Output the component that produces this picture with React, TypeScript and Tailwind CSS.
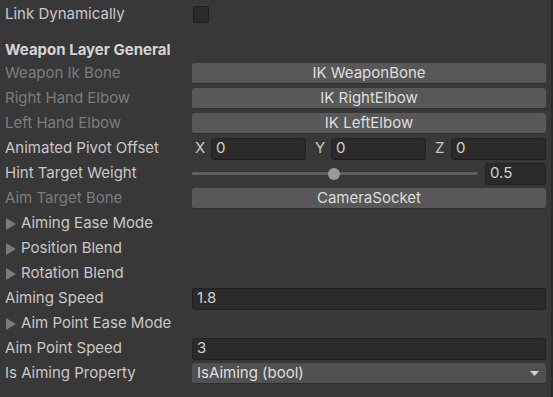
import React from 'react';

const font = "font-['Inter','Noto_Sans',sans-serif]";

const Label: React.FC<{ text: string; dim?: boolean; fold?: boolean }> = ({ text, dim, fold }) => (
  <div className={`w-[187px] shrink-0 flex items-center ${dim ? 'text-[#7d7d7d]' : 'text-[#c8c8c8]'}`}>
    {fold && (
      <svg width="10" height="12" viewBox="0 0 10 12" className="ml-[1px] mr-[5px]">
        <polygon points="0,0 10,6 0,12" fill="#7b7b7b" />
      </svg>
    )}
    <span className="whitespace-nowrap">{text}</span>
  </div>
);

const Row: React.FC<{ children: React.ReactNode }> = ({ children }) => (
  <div className="h-[25px] flex items-center pl-[5px] pr-[7px]">{children}</div>
);

const ObjButton: React.FC<{ text: string }> = ({ text }) => (
  <div className="flex-1 h-[21px] rounded-[3px] bg-[#585858] border-b border-[#303030] flex items-center justify-center text-[#dedede]">
    {text}
  </div>
);

const Field: React.FC<{ value: string; className?: string }> = ({ value, className }) => (
  <div className={`h-[22px] rounded-[3px] bg-[#2a2a2a] border border-[#212121] flex items-center pl-[4px] text-[#d2d2d2] ${className ?? ''}`}>
    {value}
  </div>
);

export default function App() {
  return (
    <div className={`w-[553px] h-[397px] bg-[#383838] ${font} text-[15px] overflow-hidden relative pt-[2px]`}>
      <Row>
        <Label text="Link Dynamically" />
        <div className="w-[16px] h-[17px] ml-[1px] rounded-[2px] bg-[#2b2b2b] border border-[#1f1f1f]" />
      </Row>

      <div className="h-[22px] mt-[12px] flex items-center pl-[5px] font-bold text-[#d4d4d4]">
        Weapon Layer General
      </div>

      <Row>
        <Label text="Weapon Ik Bone" dim />
        <ObjButton text="IK WeaponBone" />
      </Row>
      <Row>
        <Label text="Right Hand Elbow" dim />
        <ObjButton text="IK RightElbow" />
      </Row>
      <Row>
        <Label text="Left Hand Elbow" dim />
        <ObjButton text="IK LeftElbow" />
      </Row>

      <Row>
        <Label text="Animated Pivot Offset" />
        <div className="flex-1 flex items-center gap-[6px] text-[#c8c8c8]">
          {['X', 'Y', 'Z'].map((axis) => (
            <div key={axis} className="flex-1 flex items-center">
              <span className="w-[19px] shrink-0 pl-[3px]">{axis}</span>
              <Field value="0" className="flex-1" />
            </div>
          ))}
        </div>
      </Row>

      <Row>
        <Label text="Hint Target Weight" />
        <div className="flex-1 flex items-center">
          <div className="relative w-[286px] h-[12px] flex items-center">
            <div className="w-full h-[3px] bg-[#5e5e5e] rounded-full" />
            <div className="absolute left-[136px] top-0 w-[12px] h-[12px] rounded-full bg-[#999999]" />
          </div>
          <Field value="0.5" className="ml-[7px] flex-1" />
        </div>
      </Row>

      <Row>
        <Label text="Aim Target Bone" dim />
        <ObjButton text="CameraSocket" />
      </Row>

      <Row>
        <Label text="Aiming Ease Mode" fold />
      </Row>
      <Row>
        <Label text="Position Blend" fold />
      </Row>
      <Row>
        <Label text="Rotation Blend" fold />
      </Row>

      <Row>
        <Label text="Aiming Speed" />
        <Field value="1.8" className="flex-1" />
      </Row>
      <Row>
        <Label text="Aim Point Ease Mode" fold />
      </Row>
      <Row>
        <Label text="Aim Point Speed" />
        <Field value="3" className="flex-1" />
      </Row>
      <Row>
        <Label text="Is Aiming Property" />
        <div className="flex-1 h-[21px] rounded-[3px] bg-[#515151] border-b border-[#2e2e2e] flex items-center justify-between pl-[5px] pr-[7px] text-[#dedede]">
          <span>IsAiming (bool)</span>
          <svg width="9" height="5" viewBox="0 0 9 5">
            <polygon points="0,0 9,0 4.5,5" fill="#d0d0d0" />
          </svg>
        </div>
      </Row>

      <div className="absolute right-0 top-0 w-[2px] h-full bg-[#2a2a2a]" />
    </div>
  );
}
